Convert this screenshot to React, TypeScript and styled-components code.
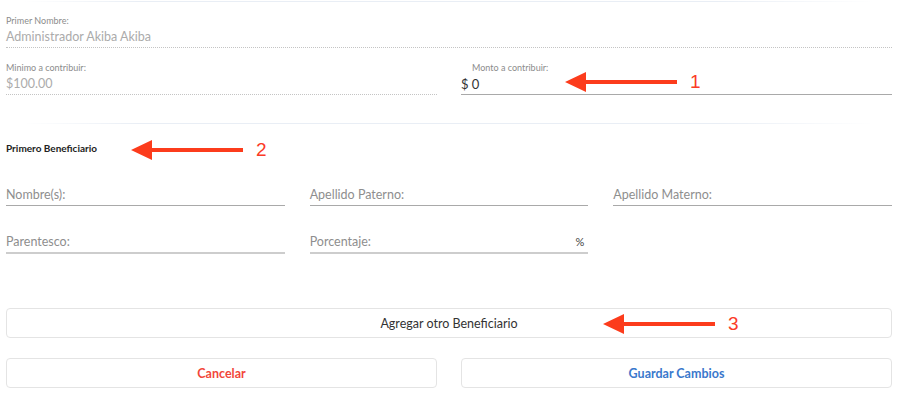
import React from "react";
import styled, { createGlobalStyle } from "styled-components";

const Global = createGlobalStyle`
  html, body { margin: 0; padding: 0; background: #fff; }
  body { font-family: "Lato", "Noto Sans", sans-serif; }
  * { box-sizing: border-box; }
`;

const Page = styled.div`
  position: relative;
  width: 912px;
  height: 398px;
  padding: 0 20px 0 6px;
  overflow: hidden;
`;

const Rule = styled.div<{ $top: number }>`
  height: 1px;
  margin-top: ${(p) => p.$top}px;
  background: linear-gradient(90deg, rgba(232,237,244,0) 2%, #e9eef5 15%, #e9eef5 80%, rgba(232,237,244,0) 98%);
`;

const TwoCol = styled.div<{ $top: number }>`
  display: grid;
  grid-template-columns: 1fr 1fr;
  column-gap: 24px;
  margin-top: ${(p) => p.$top}px;
`;

const ThreeCol = styled.div<{ $top: number }>`
  display: grid;
  grid-template-columns: 1fr 1fr 1fr;
  column-gap: 25px;
  margin-top: ${(p) => p.$top}px;
`;

const ReadField = styled.div<{ $top: number }>`
  margin-top: ${(p) => p.$top}px;
  padding-bottom: 2px;
  border-bottom: 1px dotted #c4c4c4;
`;

const SmallLabel = styled.div<{ $indent?: number }>`
  font-size: 9px;
  line-height: 11px;
  color: #8c8c8c;
  padding-left: ${(p) => p.$indent ?? 0}px;
`;

const ReadValue = styled.div`
  margin-top: 3px;
  font-size: 12.5px;
  line-height: 16px;
  color: #ababab;
`;

const AmountField = styled.div`
  padding-bottom: 2px;
  border-bottom: 1px solid #a9a9a9;
`;

const AmountValue = styled.div`
  margin-top: 3px;
  font-size: 13px;
  line-height: 16px;
  color: #333;
`;

const SectionTitle = styled.div<{ $top: number }>`
  margin-top: ${(p) => p.$top}px;
  font-size: 10px;
  line-height: 11px;
  font-weight: 700;
  color: #222;
`;

const InputField = styled.div<{ $thick?: boolean }>`
  display: flex;
  justify-content: space-between;
  align-items: center;
  padding: 0 4px 3px 0;
  border-bottom: ${(p) => (p.$thick ? "2px solid #cdcdcd" : "1px solid #a9a9a9")};
`;

const Placeholder = styled.span`
  font-size: 12.5px;
  line-height: 15px;
  color: #8e8e8e;
`;

const Suffix = styled.span`
  font-size: 11px;
  line-height: 15px;
  color: #444;
`;

const Button = styled.button<{ $top?: number; $tone: "dark" | "red" | "blue" }>`
  display: flex;
  align-items: center;
  justify-content: center;
  width: 100%;
  height: 30px;
  margin-top: ${(p) => p.$top ?? 0}px;
  padding: 0;
  border: 1px solid #e4e4e4;
  border-radius: 4px;
  background: #fff;
  font-family: "Lato", "Noto Sans", sans-serif;
  font-size: 12.5px;
  font-weight: ${(p) => (p.$tone === "dark" ? 400 : 700)};
  color: ${(p) => (p.$tone === "red" ? "#f2463a" : p.$tone === "blue" ? "#3a78cc" : "#333")};
`;

const Annotation = styled.div<{ $x: number; $y: number }>`
  position: absolute;
  left: ${(p) => p.$x}px;
  top: ${(p) => p.$y - 10}px;
  display: flex;
  align-items: center;
  height: 20px;
`;

const Num = styled.span`
  margin-left: 13px;
  font-family: "Liberation Sans", Arial, sans-serif;
  font-size: 19px;
  line-height: 20px;
  color: #fb3b26;
`;

function Arrow({ x, y, n }: { x: number; y: number; n: string }) {
  return (
    <Annotation $x={x} $y={y}>
      <svg width="112" height="20" viewBox="0 0 112 20">
        <polygon points="0,10 21,0 21,8 112,8 112,12 21,12 21,20" fill="#fc3c1c" />
      </svg>
      <Num>{n}</Num>
    </Annotation>
  );
}

export default function App() {
  return (
    <>
      <Global />
      <Page>
        <Rule $top={1} />
        <ReadField $top={13}>
          <SmallLabel>Primer Nombre:</SmallLabel>
          <ReadValue>Administrador Akiba Akiba</ReadValue>
        </ReadField>
        <TwoCol $top={14}>
          <ReadField $top={0}>
            <SmallLabel>Minimo a contribuir:</SmallLabel>
            <ReadValue>$100.00</ReadValue>
          </ReadField>
          <AmountField>
            <SmallLabel $indent={11}>Monto a contribuir:</SmallLabel>
            <AmountValue>$ 0</AmountValue>
          </AmountField>
        </TwoCol>
        <Rule $top={28} />
        <SectionTitle $top={19}>Primero Beneficiario</SectionTitle>
        <ThreeCol $top={33}>
          <InputField>
            <Placeholder>Nombre(s):</Placeholder>
          </InputField>
          <InputField>
            <Placeholder>Apellido Paterno:</Placeholder>
          </InputField>
          <InputField>
            <Placeholder>Apellido Materno:</Placeholder>
          </InputField>
        </ThreeCol>
        <ThreeCol $top={28}>
          <InputField $thick>
            <Placeholder>Parentesco:</Placeholder>
          </InputField>
          <InputField $thick>
            <Placeholder>Porcentaje:</Placeholder>
            <Suffix>%</Suffix>
          </InputField>
        </ThreeCol>
        <Button $top={54} $tone="dark">Agregar otro Beneficiario</Button>
        <TwoCol $top={20}>
          <Button $tone="red">Cancelar</Button>
          <Button $tone="blue">Guardar Cambios</Button>
        </TwoCol>
        <Arrow x={565} y={82} n="1" />
        <Arrow x={131} y={150} n="2" />
        <Arrow x={603} y={324} n="3" />
      </Page>
    </>
  );
}
